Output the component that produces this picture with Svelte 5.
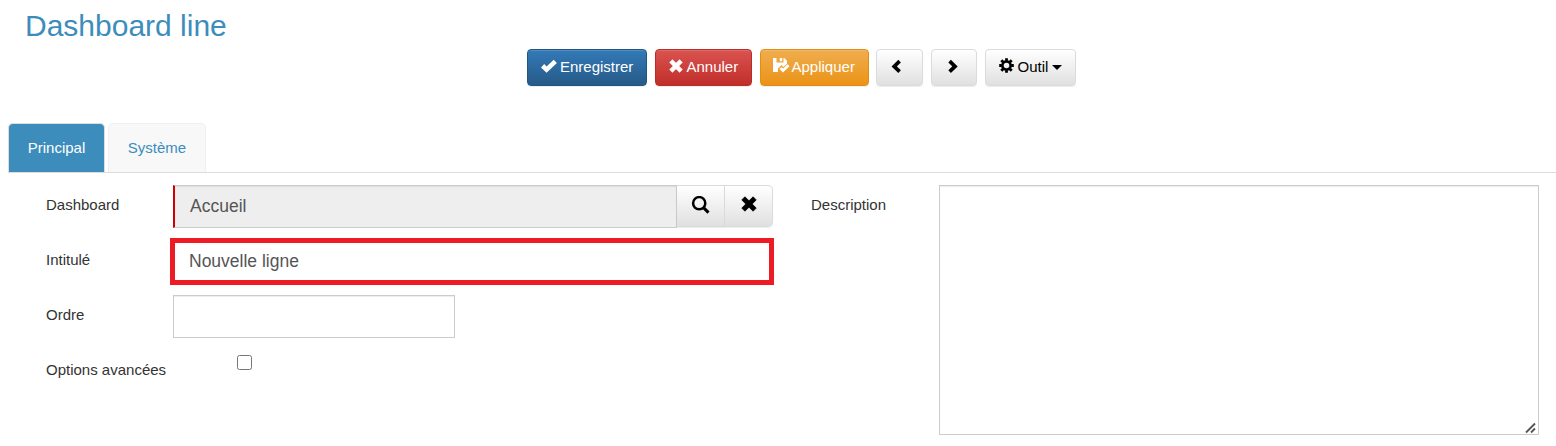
<script>
  let dashboard = $state('Accueil');
  let title = $state('Nouvelle ligne');
  let order = $state('');
  let advanced = $state(false);
  let description = $state('');
</script>

{#snippet cross(size)}
  <svg width={size} height={size} viewBox="0 0 14 14" fill="currentColor"><path d="M3.4.7 7 4.2 10.6.7 13.3 3.4 9.8 7l3.5 3.6-2.7 2.7L7 9.8l-3.6 3.5L.7 10.6 4.2 7 .7 3.4Z" stroke="currentColor" stroke-width=".7" stroke-linejoin="round" /></svg>
{/snippet}

<main>
  <h1>Dashboard line</h1>
  <div class="toolbar">
    <button class="btn save">
      <svg width="17" height="15" viewBox="0 0 17 15" fill="none"><path d="M1.6 6.8 5.6 10.6 14.3 2.4" stroke="currentColor" stroke-width="4.7" /></svg>
      <span>Enregistrer</span>
    </button>
    <button class="btn cancel">{@render cross(14)}<span>Annuler</span></button>
    <button class="btn apply">
      <svg width="17" height="15" viewBox="0 0 17 15"><path fill="currentColor" d="M0 0h3.5v4.5h7V0h.8L14 2.7v3.4L10.3 9 8.5 7 5 10.5V14H0ZM6.8 0h2.4v3.3H6.8Z" /><path d="m7.4 10 2.6 2.5 5.6-5.2" fill="none" stroke="currentColor" stroke-width="2.8" /></svg>
      <span>Appliquer</span>
    </button>
    <button class="btn light prev" aria-label="Précédent">
      <svg width="11" height="15" viewBox="0 0 11 15" fill="none"><path d="M8.6 2.2 3.2 7.4 8.6 12.6" stroke="currentColor" stroke-width="3.7" /></svg>
    </button>
    <button class="btn light next" aria-label="Suivant">
      <svg width="11" height="15" viewBox="0 0 11 15" fill="none"><path d="M1.6 2.2 7 7.4 1.6 12.6" stroke="currentColor" stroke-width="3.7" /></svg>
    </button>
    <button class="btn light tool">
      <svg width="15" height="15" viewBox="0 0 15 15"><circle cx="7.5" cy="7.5" r="4.1" fill="none" stroke="currentColor" stroke-width="2.6" /><g stroke="currentColor" stroke-width="2.8"><path d="M7.5.2v2.6M7.5 12.2v2.6M.2 7.5h2.6M12.2 7.5h2.6M2.3 2.3l2 2M10.7 10.7l2 2M2.3 12.7l2-2M10.7 4.3l2-2" /></g></svg>
      <span>Outil</span><i class="caret"></i>
    </button>
  </div>

  <nav class="tabs">
    <button class="tab active">Principal</button>
    <button class="tab">Système</button>
  </nav>

  <form class="form">
    <div class="fields">
      <label for="dashboard">Dashboard</label>
      <div class="lookup">
        <input id="dashboard" class="control readonly" bind:value={dashboard} readonly />
        <button type="button" class="addon" aria-label="Rechercher">
          <svg width="19" height="19" viewBox="0 0 19 19" fill="none" stroke="currentColor"><circle cx="8.2" cy="7.2" r="6.1" stroke-width="2.5" /><path d="m12.5 11.6 5 5" stroke-width="3" /></svg>
        </button>
        <button type="button" class="addon last" aria-label="Effacer">{@render cross(16)}</button>
      </div>
      <label for="title">Intitulé</label>
      <input id="title" class="control highlighted" bind:value={title} />
      <label for="order">Ordre</label>
      <input id="order" class="control short" bind:value={order} />
      <label for="advanced">Options avancées</label>
      <input id="advanced" class="check" type="checkbox" bind:checked={advanced} />
    </div>
    <label class="desc-label" for="description">Description</label>
    <div class="area">
      <textarea id="description" class="control" bind:value={description}></textarea>
      <svg class="grip" width="12" height="12" viewBox="0 0 12 12"><path d="m1 10.5 9-9M6 10.5l4-4" stroke="#555" stroke-width="1.8" /></svg>
    </div>
  </form>
</main>

<style>
  :global(body) { background: #fff; overflow: hidden; }
  main, button, input, textarea { font-family: "Liberation Sans", Arial, sans-serif; }
  main { height: 446px; font-size: 15px; color: #333; }
  *, *::before { box-sizing: border-box; }
  h1 { margin: 0; padding: 9px 0 0 25px; height: 49px; font-size: 30px; line-height: 34px; font-weight: 400; color: #3c8dbc; }
  svg { display: block; flex: none; }

  .toolbar { display: flex; height: 37px; padding-left: 527px; }
  .btn { display: flex; align-items: flex-start; height: 37px; padding: 8px 0 0 13px; border: 1px solid; border-radius: 4px; font-size: 15px; line-height: 18px; color: #fff; white-space: nowrap; box-shadow: inset 0 1px 0 rgba(255,255,255,.15), 0 1px 1px rgba(0,0,0,.075); }
  .btn svg { margin-top: 1px; }
  .save { width: 120px; margin-right: 8px; background: linear-gradient(#337ab7, #265a88); border-color: #245580; }
  .save span { margin-left: 2px; }
  .cancel { width: 97px; margin-right: 8px; background: linear-gradient(#d9534f, #c12e2a); border-color: #b92c28; }
  .cancel svg { margin-top: .5px; }
  .cancel span { margin-left: 3.5px; }
  .apply { width: 109px; margin-right: 7px; padding-left: 12px; background: linear-gradient(#f0ad4e, #eb9316); border-color: #e38d13; }
  .apply svg { margin-top: 0; }
  .apply span { margin-left: 1.5px; }
  .light { background: linear-gradient(#fff, #e0e0e0); border-color: #dbdbdb; color: #000; }
  .prev { width: 47px; margin-right: 8px; padding-left: 14px; }
  .next { width: 46px; margin-right: 8px; padding-left: 16px; }
  .light.prev svg, .light.next svg { margin-top: .5px; }
  .tool { width: 91px; padding-left: 13px; }
  .tool svg { margin-top: 0; }
  .tool span { margin-left: 3.5px; }
  .caret { margin: 7px 0 0 4px; border: 5px solid transparent; border-top-color: #000; border-bottom: 0; }

  .tabs { display: flex; gap: 3px; height: 50px; margin: 37px 0 0 8px; border-bottom: 1px solid #ddd; }
  .tab { width: 98px; height: 49px; padding: 0 0 2px; border: 1px solid #f0f0f0; border-bottom: 0; border-radius: 5px 5px 0 0; background: #f8f8f8; color: #3c8dbc; font-size: 15px; }
  .tab.active { width: 97px; background: #3c8dbc; border-color: #ddd; color: #fff; }

  .form { display: flex; align-items: flex-start; padding: 12px 0 0 46px; }
  .fields { display: grid; grid-template-columns: 127px 600px; grid-auto-rows: 55px; width: 765px; align-items: start; }
  label { padding-top: 11px; line-height: 18px; white-space: nowrap; }
  .control { display: block; height: 43px; margin: 0; padding: 0 15px; border: 1px solid #ccc; border-radius: 0; outline: 0; background: #fff; color: #555; font-size: 17.5px; box-shadow: inset 0 1px 1px rgba(0,0,0,.075); }
  .lookup { display: flex; }
  .readonly { width: 504px; border-left: 2px solid #d00000; background: #eee; }
  .addon { display: flex; width: 48px; height: 42px; justify-content: center; padding: 10px 0 0; border: 1px solid #dbdbdb; border-left: 0; background: linear-gradient(#fff, #e0e0e0); color: #000; box-shadow: 0 1px 1px rgba(0,0,0,.075); }
  .last { border-radius: 0 5px 5px 0; }
  .highlighted { width: 604px; height: 47px; margin: -2px 0 0 -3px; border: 5px solid #ed1c24; padding: 0 14px; box-shadow: none; }
  .short { width: 282px; }
  .check { width: 15px; height: 15px; margin: 5px 0 0 64px; }
  .desc-label { width: 128px; }
  .area { position: relative; }
  textarea.control { width: 600px; height: 250px; resize: none; }
  .grip { position: absolute; right: 2px; bottom: 1px; pointer-events: none; }
</style>
